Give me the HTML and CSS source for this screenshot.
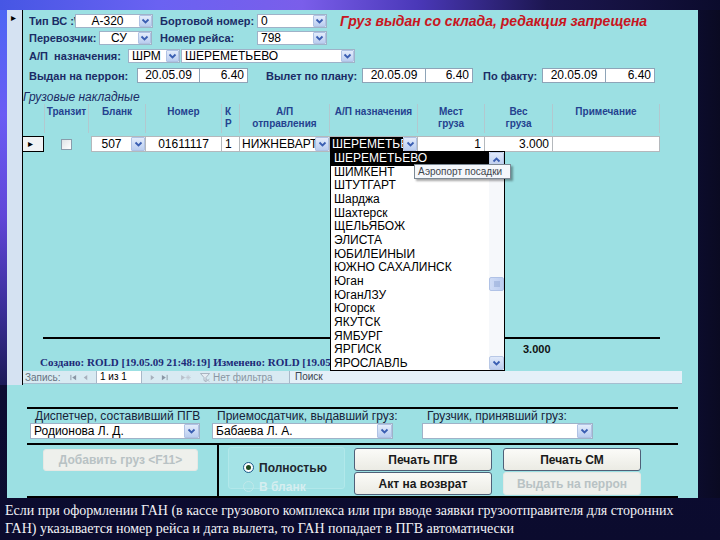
FILE: index.html
```html
<!DOCTYPE html>
<html lang="ru">
<head>
<meta charset="utf-8">
<title>ПГВ</title>
<link rel="stylesheet" href="styles.css">
</head>
<body>
<div class="screen">
  <div class="topband"></div>
  <div class="mid">
    <div class="leftstrip"></div>
    <div class="panel">
      <div class="upper">
        <div class="selcol"><span class="selarrow">▸</span></div>
        <div class="content">
          <div class="frow r1">
            <span class="lbl">Тип ВС :\</span>
            <div class="combo c"><span class="val">А-320</span><span class="dd"><svg viewBox="0 0 9 7"><path d="M1.5 1.5 L4.5 4.5 L7.5 1.5" fill="none" stroke="#3a5eb2" stroke-width="1.8"/></svg></span></div>
            <span></span>
            <span class="lbl">Бортовой номер:</span>
            <div class="combo"><span class="val">0</span><span class="dd"><svg viewBox="0 0 9 7"><path d="M1.5 1.5 L4.5 4.5 L7.5 1.5" fill="none" stroke="#3a5eb2" stroke-width="1.8"/></svg></span></div>
            <span></span>
            <span class="warn">Груз выдан со склада, редакция запрещена</span>
          </div>
          <div class="frow r2">
            <span class="lbl">Перевозчик:</span>
            <div class="combo c"><span class="val">СУ</span><span class="dd"><svg viewBox="0 0 9 7"><path d="M1.5 1.5 L4.5 4.5 L7.5 1.5" fill="none" stroke="#3a5eb2" stroke-width="1.8"/></svg></span></div>
            <span></span>
            <span class="lbl">Номер рейса:</span>
            <div class="combo"><span class="val">798</span><span class="dd"><svg viewBox="0 0 9 7"><path d="M1.5 1.5 L4.5 4.5 L7.5 1.5" fill="none" stroke="#3a5eb2" stroke-width="1.8"/></svg></span></div>
          </div>
          <div class="frow r3">
            <span class="lbl">А/П&nbsp; назначения:</span>
            <div class="combo"><span class="val">ШРМ</span><span class="dd"><svg viewBox="0 0 9 7"><path d="M1.5 1.5 L4.5 4.5 L7.5 1.5" fill="none" stroke="#3a5eb2" stroke-width="1.8"/></svg></span></div>
            <span></span>
            <div class="combo"><span class="val">ШЕРЕМЕТЬЕВО</span><span class="dd"><svg viewBox="0 0 9 7"><path d="M1.5 1.5 L4.5 4.5 L7.5 1.5" fill="none" stroke="#3a5eb2" stroke-width="1.8"/></svg></span></div>
          </div>
          <div class="frow r4">
            <span class="lbl">Выдан на перрон:</span>
            <span class="tb c">20.05.09</span>
            <span class="tb r nl">6.40</span>
            <span></span>
            <span class="lbl">Вылет по плану:</span>
            <span class="tb c">20.05.09</span>
            <span class="tb r nl">6.40</span>
            <span></span>
            <span class="lbl">По факту:</span>
            <span class="tb c">20.05.09</span>
            <span class="tb r nl">6.40</span>
          </div>
          <div class="sublbl">Грузовые накладные</div>

          <div class="sub">
            <div class="ghead">
              <div class="hsel"></div>
              <div class="first">Транзит</div>
              <div>Бланк</div>
              <div>Номер</div>
              <div class="kr">К<br>Р</div>
              <div>А/П<br>отправления</div>
              <div>А/П назначения</div>
              <div>Мест<br>груза</div>
              <div>Вес<br>груза</div>
              <div>Примечание</div>
            </div>
            <div class="grow">
              <div class="gsel">▸</div>
              <div class="gtr"><span class="chk"></span></div>
              <div class="gc gcombo"><span class="val c">507</span><span class="dd"><svg viewBox="0 0 9 7"><path d="M1.5 1.5 L4.5 4.5 L7.5 1.5" fill="none" stroke="#3a5eb2" stroke-width="1.8"/></svg></span></div>
              <div class="gc c">01611117</div>
              <div class="gc">1</div>
              <div class="gc gcombo"><span class="val">НИЖНЕВАРТОВСК</span><span class="dd"><svg viewBox="0 0 9 7"><path d="M1.5 1.5 L4.5 4.5 L7.5 1.5" fill="none" stroke="#3a5eb2" stroke-width="1.8"/></svg></span></div>
              <div class="gc gcombo"><span class="val inv">ШЕРЕМЕТЬЕВО</span><span class="dd"><svg viewBox="0 0 9 7"><path d="M1.5 1.5 L4.5 4.5 L7.5 1.5" fill="none" stroke="#3a5eb2" stroke-width="1.8"/></svg></span></div>
              <div class="gc r">1</div>
              <div class="gc r">3.000</div>
              <div class="gc"></div>
            </div>
            <div class="gspace"></div>
            <div class="gline"></div>
            <div class="tot">3.000</div>
            <div class="created">Создано: ROLD [19.05.09 21:48:19] Изменено: ROLD [19.05.09 21:48:19]</div>
            <div class="nav">
              <span class="nlbl">Запись:</span>
              <span class="nico"><svg viewBox="0 0 8 8"><path d="M1 1 V7" stroke="#8a96a4" stroke-width="1"/><path d="M7 1 L2.5 4 L7 7 Z" fill="#8a96a4"/></svg></span>
              <span class="nico"><svg viewBox="0 0 8 8"><path d="M6 1 L2 4 L6 7 Z" fill="#a6b0bc"/></svg></span>
              <span class="nbox">1 из 1</span>
              <span class="nico"><svg viewBox="0 0 8 8"><path d="M2 1 L6 4 L2 7 Z" fill="#a6b0bc"/></svg></span>
              <span class="nico"><svg viewBox="0 0 8 8"><path d="M1 1 L5.5 4 L1 7 Z" fill="#8a96a4"/><path d="M7 1 V7" stroke="#8a96a4" stroke-width="1"/></svg></span>
              <span class="nico wide"><svg viewBox="0 0 12 8"><path d="M1 1 L5.5 4 L1 7 Z" fill="#b8c0ca"/><path d="M9 1 V7 M6 4 H12 M7 2 L11 6 M11 2 L7 6" stroke="#c0c8d2" stroke-width="0.9"/></svg></span>
              <span class="nfilt"><svg viewBox="0 0 10 9"><path d="M0.5 0.5 H9.5 L6 4.5 V8.5 L4 7.5 V4.5 Z" fill="#e6ecf2" stroke="#9aa6b4" stroke-width="0.8"/><path d="M6 6 L9.5 8.5 M9.5 6 L6 8.5" stroke="#b0b8c4" stroke-width="0.8"/></svg>Нет фильтра</span>
              <span class="nsearch">Поиск</span>
            </div>
          </div>

          <div class="dlist">
            <div class="ditems">
              <div class="di sel">ШЕРЕМЕТЬЕВО</div>
              <div class="di">ШИМКЕНТ</div>
              <div class="di">ШТУТГАРТ</div>
              <div class="di">Шарджа</div>
              <div class="di">Шахтерск</div>
              <div class="di">ЩЕЛЬЯБОЖ</div>
              <div class="di">ЭЛИСТА</div>
              <div class="di">ЮБИЛЕЙНЫЙ</div>
              <div class="di">ЮЖНО САХАЛИНСК</div>
              <div class="di">Юган</div>
              <div class="di">ЮганЛЗУ</div>
              <div class="di">Югорск</div>
              <div class="di">ЯКУТСК</div>
              <div class="di">ЯМБУРГ</div>
              <div class="di">ЯРГИСК</div>
              <div class="di">ЯРОСЛАВЛЬ</div>
            </div>
            <div class="sbar">
              <span class="sbtn"><svg viewBox="0 0 9 7"><path d="M1.5 5.5 L4.5 2.5 L7.5 5.5" fill="none" stroke="#3a5eb2" stroke-width="1.8"/></svg></span>
              <span class="strack top"></span>
              <span class="sthumb"><svg viewBox="0 0 8 6"><path d="M1 1 H7 M1 3 H7 M1 5 H7" stroke="#8aa2d0" stroke-width="0.9"/></svg></span>
              <span class="strack"></span>
              <span class="sbtn"><svg viewBox="0 0 9 7"><path d="M1.5 1.5 L4.5 4.5 L7.5 1.5" fill="none" stroke="#3a5eb2" stroke-width="1.8"/></svg></span>
            </div>
          </div>
          <div class="tip">Аэропорт посадки</div>
        </div>
      </div>

      <div class="lower">
        <div class="hsep"></div>
        <div class="people">
          <div class="pcol">
            <div class="plbl">Диспетчер, составивший ПГВ</div>
            <div class="combo big"><span class="val">Родионова Л. Д.</span><span class="dd"><svg viewBox="0 0 9 7"><path d="M1.5 1.5 L4.5 4.5 L7.5 1.5" fill="none" stroke="#3a5eb2" stroke-width="1.8"/></svg></span></div>
          </div>
          <div class="pcol">
            <div class="plbl">Приемосдатчик, выдавший груз:</div>
            <div class="combo big"><span class="val">Бабаева Л. А.</span><span class="dd"><svg viewBox="0 0 9 7"><path d="M1.5 1.5 L4.5 4.5 L7.5 1.5" fill="none" stroke="#3a5eb2" stroke-width="1.8"/></svg></span></div>
          </div>
          <div class="pcol p3">
            <div class="plbl">Грузчик, принявший груз:</div>
            <div class="combo big"><span class="val"></span><span class="dd"><svg viewBox="0 0 9 7"><path d="M1.5 1.5 L4.5 4.5 L7.5 1.5" fill="none" stroke="#3a5eb2" stroke-width="1.8"/></svg></span></div>
          </div>
        </div>
        <div class="hsep"></div>
        <div class="actions">
          <div class="addcol"><span class="btn dis wideb">Добавить груз &lt;F11&gt;</span></div>
          <div class="vsep"></div>
          <div class="radiogrp">
            <div class="ropt"><span class="radio on"></span><span>Полностью</span></div>
            <div class="ropt dis"><span class="radio"></span><span>В бланк</span></div>
          </div>
          <div class="btns">
            <span class="btn">Печать ПГВ</span>
            <span class="btn">Печать СМ</span>
            <span class="btn">Акт на возврат</span>
            <span class="btn dis">Выдать на перрон</span>
          </div>
        </div>
        <div class="hsep"></div>
      </div>
    </div>
    <div class="rightdark"></div>
  </div>
  <div class="caption">Если при оформлении ГАН (в кассе грузового комплекса или при вводе заявки грузоотправителя для сторонних<br>ГАН) указывается номер рейса и дата вылета, то ГАН попадает в ПГВ автоматически</div>
</div>
</body>
</html>
```

FILE: styles.css
```css
* { box-sizing: border-box; }
html, body { margin: 0; padding: 0; }
body {
  width: 720px; height: 540px; overflow: hidden;
  background: #0b0b2c;
  font-family: "Liberation Sans", Arial, sans-serif;
  font-size: 11px; color: #000;
}
.screen {
  width: 720px; height: 540px;
  display: flex; flex-direction: column;
  background: linear-gradient(180deg, #0f0f3c 0%, #0b0b2e 100%);
}
.topband {
  height: 10px;
  background: linear-gradient(90deg, #4656e4 0%, #6a62f2 22%, #7a5eea 42%, #4a38b8 58%, #1c1650 76%, #0b0b2c 100%);
}
.mid { height: 488px; display: flex; }
.leftstrip {
  width: 7px; height: 375px;
  background: linear-gradient(180deg, #4c66f4 0%, #6a5cf4 28%, #6046d8 55%, #3a2e98 80%, #1c1a58 100%);
}
.panel { width: 691px; background: #9ce0e3; display: flex; flex-direction: column; }
.rightdark { flex: 1; background: linear-gradient(90deg, #0c0c2c, #0a0a22); }

/* upper (form + subform) */
.upper { height: 375px; display: flex; }
.selcol { width: 16px; background: #d5e2f2; border-right: 1px solid #000; padding: 1px 0 0 4px; }
.selarrow { font-size: 10px; line-height: 10px; color: #000; }
.content { width: 675px; position: relative; display: flex; flex-direction: column; }

.frow { display: grid; align-items: center; margin-left: 6px; height: 14px; }
.r1 { margin-top: 3px; grid-template-columns: 46px 78px 7px 97px 70px 13px auto; }
.r2 { margin-top: 4px; grid-template-columns: 70px 53px 8px 97px 70px; }
.r3 { margin-top: 4px; grid-template-columns: 99px 52px 1px 174px; }
.r4 { margin-top: 5px; height: 15px; grid-template-columns: 108px 63px 48px 18px 96px 64px 47px 10px 59px 64px 49px; }

.lbl { font-weight: bold; font-size: 11px; color: #1b2c66; white-space: nowrap; overflow: hidden; }
.warn { font-weight: bold; font-style: italic; font-size: 14px; color: #c81520; white-space: nowrap; }

.combo { display: flex; height: 14px; background: #fff; border: 1px solid #9fb2c8; }
.combo .val { flex: 1; font-size: 12px; line-height: 12px; padding: 0 3px; white-space: nowrap; overflow: hidden; }
.combo.c .val, .val.c { text-align: center; }
.dd {
  width: 13px; height: 12px; flex: none;
  background: linear-gradient(#e3ecfb, #bacdef);
  border: 1px solid #b0c2e4; border-radius: 1px;
  display: flex; align-items: center; justify-content: center;
}
.dd svg { width: 9px; height: 7px; display: block; }
.combo.big { height: 16px; }
.combo.big .val { line-height: 14px; }
.combo.big .dd { height: 14px; width: 15px; }

.tb {
  height: 15px; background: #fff; border: 1px solid #8ea4b8;
  font-size: 12px; line-height: 13px; padding: 0 3px; white-space: nowrap;
}
.tb.c { text-align: center; }
.tb.r { text-align: right; }
.tb.nl { border-left: none; }

.sublbl {
  margin-top: 8px; height: 13px; line-height: 13px;
  font-size: 12px; font-style: italic; color: #1b2c66;
}

/* subform */
.sub { flex: 1; display: flex; flex-direction: column; }
.ghead, .grow {
  display: grid;
  grid-template-columns: 21px 45px 57px 76px 18px 90px 88px 67px 68px 107px;
}
.ghead { height: 29px; }
.ghead > div {
  border-right: 1px solid #b2c8cf;
  text-align: center; font-weight: bold; font-size: 10px; line-height: 12px;
  color: #24428f; padding-top: 2px;
}
.ghead > .hsel { border-right: none; }
.ghead > .first { border-left: 1px solid #b2c8cf; }
.ghead > .kr { text-align: left; padding-left: 3px; }

.grow { height: 16px; margin-top: 3px; }
.gsel {
  background: #f0f2f4; border: 1px solid #000; border-left: none;
  font-size: 10px; line-height: 14px; padding-left: 5px;
}
.gtr { display: flex; align-items: center; justify-content: center; }
.chk {
  width: 11px; height: 11px; background: linear-gradient(135deg, #dfe3e6, #ffffff);
  border: 1px solid #8a9cab;
}
.gc {
  background: #fff; border: 1px solid #b4b8bc; border-left: none;
  font-size: 12px; line-height: 14px; padding: 0 3px;
  white-space: nowrap; overflow: hidden;
}
.grow > .gc:nth-child(3) { border-left: 1px solid #b4b8bc; margin-left: 2px; }
.gc.c { text-align: center; }
.gc.r { text-align: right; }
.gcombo { display: flex; padding: 0; }
.gcombo .val { flex: 1; padding: 0 2px; overflow: hidden; white-space: nowrap; }
.gcombo .val.inv { background: #000; color: #fff; }
.gcombo .dd { height: 14px; width: 14px; }

.gspace { height: 185px; }
.gline { margin-left: 20px; width: 617px; height: 2px; background: #000; }
.tot { margin-top: 4px; height: 13px; padding-left: 500px; font-weight: bold; font-size: 11px; line-height: 13px; color: #111; }
.created {
  height: 13px; padding-left: 17px; white-space: nowrap;
  font-family: "Liberation Serif", "Times New Roman", serif;
  font-weight: bold; font-size: 11px; line-height: 13px; color: #1c2a78;
}
.nav {
  margin-top: 2px; height: 13px; width: 659px;
  display: flex; align-items: center;
  background: #d8eaf2; border-bottom: 1px solid #a6bed0;
  font-size: 10px; color: #7a8694; white-space: nowrap;
}
.nlbl { padding-left: 2px; width: 44px; color: #66727e; }
.nico { width: 12px; display: flex; justify-content: center; }
.nico svg { width: 7px; height: 7px; display: block; }
.nico.wide { width: 30px; }
.nico.wide svg { width: 11px; }
.nbox {
  width: 46px; height: 12px; margin: 0 4px 0 5px; background: #fff;
  border-left: 1px solid #a8b8c8; border-right: 1px solid #a8b8c8;
  color: #000; line-height: 12px; padding-left: 3px;
}
.nfilt { display: flex; align-items: center; gap: 3px; width: 90px; border-right: 1px solid #a8b8c8; height: 12px; color: #8a96a2; }
.nfilt svg { width: 10px; height: 9px; }
.nsearch { flex: 1; height: 12px; padding-left: 5px; line-height: 12px; color: #3a4450; background: #e4f0f8; }

/* dropdown list */
.dlist {
  position: absolute; left: 307px; top: 141px; width: 175px; height: 220px;
  background: #fff; border: 1px solid #000; display: flex;
}
.ditems { flex: 1; padding-top: 0; }
.di {
  height: 13.67px; line-height: 13.67px; font-size: 12px; padding-left: 3px;
  color: #000; white-space: nowrap; overflow: hidden;
}
.di.sel { background: #000; color: #fff; }
.sbar { width: 15px; display: flex; flex-direction: column; background: #f6f8fb; }
.sbtn {
  height: 14px; background: linear-gradient(#e0e9fa, #bccdee);
  border: 1px solid #b8c8e6; border-radius: 2px;
  display: flex; align-items: center; justify-content: center;
}
.sbtn svg { width: 9px; height: 7px; }
.strack { flex-grow: 4.6; }
.strack.top { flex-grow: 7.8; }
.sthumb {
  height: 14px; background: linear-gradient(90deg, #cfdcf6, #bccdf0);
  border: 1px solid #b0c2e6; border-radius: 2px;
  display: flex; align-items: center; justify-content: center;
}
.sthumb svg { width: 8px; height: 6px; }
.tip {
  position: absolute; left: 391px; top: 154px; width: 97px; height: 15px;
  background: #f4f7fb; border: 1px solid #7c8894;
  box-shadow: 2px 2px 2px rgba(0,0,0,0.35);
  font-size: 10px; line-height: 13px; color: #3c444c; padding-left: 3px; white-space: nowrap;
}

/* lower */
.lower { height: 113px; padding: 22px 20px 0; }
.hsep { height: 2px; background: #000; }
.people {
  height: 34px; padding: 1px 0 0 3px;
  display: grid; grid-template-columns: 170px 181px 188px; column-gap: 12px;
}
.p3 { padding-left: 17px; }
.plbl { padding-left: 5px; height: 13px; font-size: 12px; line-height: 13px; color: #17223a; white-space: nowrap; }
.actions { height: 51px; display: flex; }
.addcol { width: 190px; padding: 4px 0 0 16px; }
.vsep { width: 2px; background: #000; }
.radiogrp {
  margin: 2px 0 0 9px; width: 117px; height: 42px;
  border: 1px solid #b2e8ea; border-radius: 3px; background: #a4e3e6;
  padding: 10px 0 0 14px;
}
.ropt { display: flex; align-items: center; gap: 5px; height: 19px; font-size: 12px; font-weight: bold; color: #1e262e; }
.ropt.dis { color: #d6eef0; }
.radio {
  width: 11px; height: 11px; border-radius: 50%;
  border: 1px solid #1d5a8a; background: radial-gradient(circle, #fff 55%, #dde6ee 100%);
  display: flex; align-items: center; justify-content: center;
}
.radio.on::after { content: ""; width: 5px; height: 5px; border-radius: 50%; background: #1f4a1f; }
.ropt.dis .radio { border-color: #c0e8ea; background: transparent; }
.btns {
  margin-left: 9px; padding-top: 3px;
  display: grid; grid-template-columns: 138px 138px; grid-auto-rows: 23px;
  column-gap: 11px; row-gap: 1px;
}
.btn {
  display: flex; align-items: center; justify-content: center;
  background: linear-gradient(#fbfbf8, #ebebe4);
  border: 1px solid #4f6078; border-radius: 3px;
  font-size: 12px; font-weight: bold; color: #1a1a1a; white-space: nowrap;
}
.btn.dis { border-color: #e6e8e4; color: #b8c2c4; background: #eef0ec; }
.btn.wideb { height: 22px; width: 155px; }

/* caption */
.caption {
  height: 42px; padding: 4px 0 0 5px;
  font-family: "Liberation Serif", "Times New Roman", serif;
  font-size: 14px; line-height: 18px; color: #f2f2f6; white-space: nowrap;
}
```
